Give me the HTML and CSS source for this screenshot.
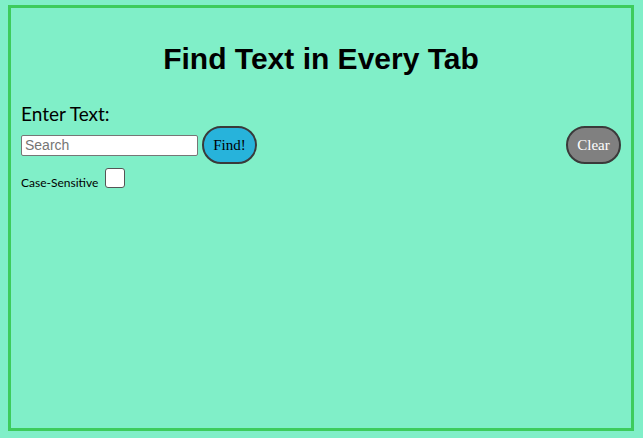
FILE: index.html
```html
<!DOCTYPE html>
<html>
<head>
<meta charset="utf-8">
<link rel="stylesheet" href="styles.css">
</head>
<body>
<div class="panel">
  <h1 class="title">Find Text in Every Tab</h1>
  <div class="label">Enter Text:</div>
  <div class="row">
    <input class="search" type="text" placeholder="Search">
    <button class="btn find">Find!</button>
    <button class="btn clear">Clear</button>
  </div>
  <div class="case">
    <span class="case-label">Case-Sensitive</span>
    <span class="checkbox"></span>
  </div>
</div>
</body>
</html>
```
FILE: styles.css
```css
html, body {
  background: #80efc8;
}
body {
  margin: 5px 9px 7px 8px;
}
.panel {
  border: 3px solid #3dcc5c;
  height: 420px;
  padding: 0 10px;
}
.title {
  font-family: "Liberation Sans", Arial, sans-serif;
  font-weight: bold;
  font-size: 30px;
  text-align: center;
  margin: 34px 0 0 0;
  line-height: 34px;
  color: #000;
}
.label {
  font-family: Lato, "Open Sans", sans-serif;
  font-size: 19px;
  margin-top: 28px;
  line-height: 20px;
  color: #000;
}
.row {
  display: flex;
  align-items: center;
  margin-top: 2px;
}
.search {
  box-sizing: border-box;
  width: 177px;
  height: 21px;
  border: 1px solid #767676;
  border-radius: 2px;
  padding: 0 3px;
  font-family: "Liberation Sans", Arial, sans-serif;
  font-size: 14px;
  background: #fff;
}
.search::placeholder {
  color: #757575;
}
.btn {
  box-sizing: border-box;
  width: 55px;
  height: 38px;
  border: 2px solid #3a3a3a;
  border-radius: 19px;
  font-family: "Liberation Serif", "Times New Roman", serif;
  font-size: 15px;
  padding: 0;
}
.find {
  background: #27b3db;
  color: #000;
  margin-left: 4px;
}
.clear {
  background: #808080;
  color: #fff;
  margin-left: auto;
}
.case {
  display: flex;
  align-items: center;
  margin-top: 2px;
}
.case-label {
  font-family: Lato, "Open Sans", sans-serif;
  font-size: 12px;
  margin-top: 9px;
  color: #000;
}
.checkbox {
  box-sizing: border-box;
  width: 20px;
  height: 20px;
  border: 1px solid #555;
  border-radius: 3px;
  background: #fff;
  margin-left: 7px;
}
```
